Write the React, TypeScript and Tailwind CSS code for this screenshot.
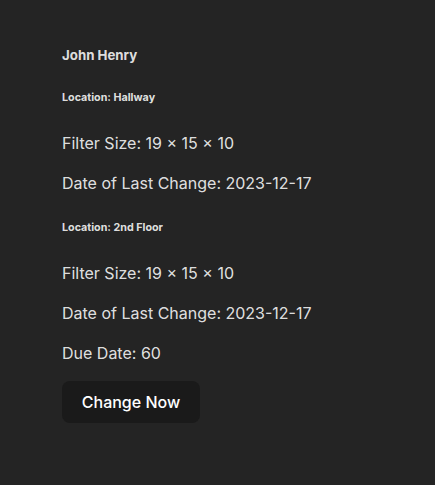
const locations = [
  { name: "Hallway", size: "19 × 15 × 10", lastChange: "2023-12-17" },
  { name: "2nd Floor", size: "19 × 15 × 10", lastChange: "2023-12-17", due: 60 },
];

export default function App() {
  return (
    <main
      className="min-h-[485px] bg-[#242424] px-[62px] pt-[45px] text-[rgba(255,255,255,0.87)]"
      style={{ fontFamily: "Inter, 'Noto Sans', sans-serif" }}
    >
      <h5 className="text-[13.28px] font-bold leading-[20px]">John Henry</h5>
      {locations.map((loc) => (
        <section key={loc.name}>
          <h6 className="mt-[25px] mb-[25px] text-[10.72px] font-bold leading-[16px]">
            Location: {loc.name}
          </h6>
          <p className="text-base leading-6">Filter Size: {loc.size}</p>
          <p className="mt-4 text-base leading-6">Date of Last Change: {loc.lastChange}</p>
          {loc.due !== undefined ? (
            <p className="mt-4 text-base leading-6">Due Date: {loc.due}</p>
          ) : null}
        </section>
      ))}
      <button
        type="button"
        className="mt-4 flex h-[42px] w-[138px] items-center justify-center rounded-lg border border-transparent bg-[#1a1a1a] text-base font-medium text-white"
      >
        Change Now
      </button>
    </main>
  );
}
